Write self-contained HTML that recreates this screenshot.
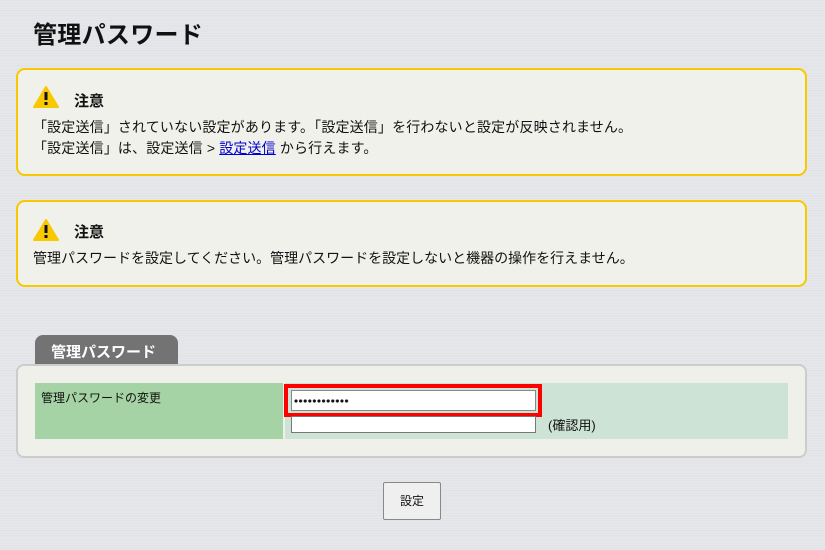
<!DOCTYPE html>
<html><head><meta charset="utf-8"><style>
*{margin:0;padding:0;box-sizing:border-box}
body{width:825px;height:550px;overflow:hidden;position:relative;font-family:"Liberation Sans","Noto Sans CJK JP",sans-serif;color:#111;
background:#e3e5e9 repeating-linear-gradient(180deg,#e6e8ec 0px,#dcdee3 1px,#e9ebee 2px,#e1e3e7 3px,#e7e9ec 5px);}
.a{position:absolute}
h1{position:absolute;left:33px;top:15px;font-size:24px;font-weight:bold;letter-spacing:0.3px;white-space:nowrap}
.box{position:absolute;left:16px;width:791px;border:2px solid #f8c800;border-radius:9px;background:#f1f1eb}
.ic{position:absolute;left:15px;width:26px;height:22px}
.tt{position:absolute;left:56px;font-size:15px;font-weight:bold}
.tx{position:absolute;left:15px;font-size:14px;line-height:21px;white-space:nowrap}
a{color:#00c;text-decoration:underline}
.inp{position:absolute;background:#fff;border:1px solid #777}
</style></head><body>
<h1>管理パスワード</h1>

<div class="box" style="top:68px;height:108px">
 <svg class="ic" style="top:16px" viewBox="0 0 26 22"><path d="M13 1 L25 21 L1 21 Z" fill="#f8c800" stroke="#f8c800" stroke-width="2" stroke-linejoin="round"/><rect x="11.5" y="6" width="3" height="8" fill="#111"/><rect x="11.5" y="16" width="3" height="3" fill="#111"/></svg>
 <div class="tt" style="top:20px">注意</div>
 <div class="tx" style="top:47px;letter-spacing:0.15px">「設定送信」されていない設定があります。「設定送信」を行わないと設定が反映されません。<br>「設定送信」は、設定送信 &gt; <a>設定送信</a> から行えます。</div>
</div>

<div class="box" style="top:200px;height:87px">
 <svg class="ic" style="top:17px" viewBox="0 0 26 22"><path d="M13 1 L25 21 L1 21 Z" fill="#f8c800" stroke="#f8c800" stroke-width="2" stroke-linejoin="round"/><rect x="11.5" y="6" width="3" height="8" fill="#111"/><rect x="11.5" y="16" width="3" height="3" fill="#111"/></svg>
 <div class="tt" style="top:19px">注意</div>
 <div class="tx" style="top:46px">管理パスワードを設定してください。管理パスワードを設定しないと機器の操作を行えません。</div>
</div>

<div class="a" style="left:35px;top:335px;width:143px;height:30px;background:#737373;border-radius:8px 8px 0 0;color:#fff;font-weight:bold;font-size:15px;padding:6px 0 0 16px;white-space:nowrap">管理パスワード</div>
<div class="a" style="left:16px;top:364px;width:791px;height:94px;border:2px solid #ccc;border-radius:8px;background:#f0f0eb"></div>
<div class="a" style="left:35px;top:383px;width:248px;height:56px;background:#a6d3a5;font-size:12px;padding:6px 0 0 6px">管理パスワードの変更</div>
<div class="a" style="left:285px;top:383px;width:503px;height:56px;background:#cde3d6"></div>
<div class="a" style="left:284px;top:384px;width:258px;height:33px;border:4px solid #f00"></div>
<div class="inp" style="left:291px;top:390px;width:245px;height:21px;border-color:#888"></div>
<div class="a" style="left:294px;top:399px;width:55px;height:4px;background:radial-gradient(circle at 2px 2px,#111 1.4px,transparent 1.8px) 0 0/4.6px 4px repeat-x"></div>
<div class="inp" style="left:291px;top:416px;width:245px;height:17px"></div>
<div class="a" style="left:548px;top:415px;font-size:13px">(確認用)</div>

<div class="a" style="left:383px;top:482px;width:58px;height:38px;border:1px solid #888;border-radius:2px;background:#efefef;font-size:12px;text-align:center;line-height:36px">設定</div>
</body></html>
